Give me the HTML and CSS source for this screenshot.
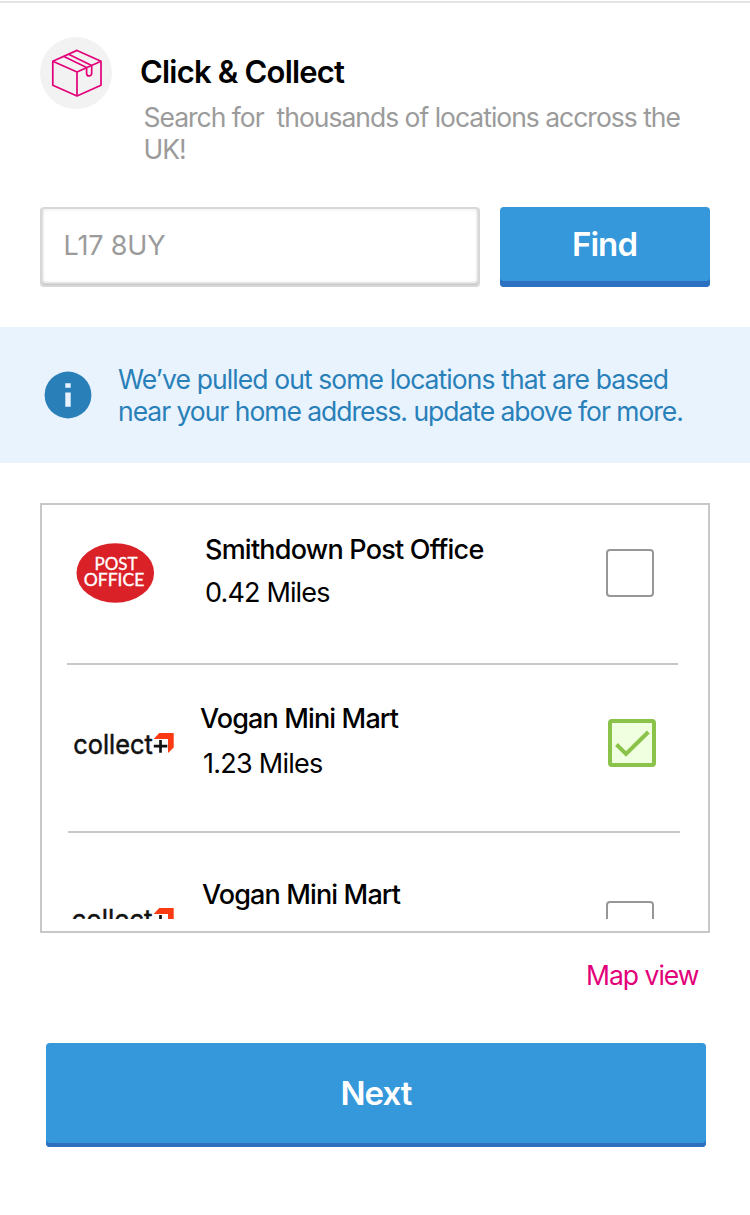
FILE: index.html
```html
<!DOCTYPE html>
<html lang="en">
<head>
<meta charset="utf-8">
<title>Click &amp; Collect</title>
<link rel="stylesheet" href="styles.css">
</head>
<body>
<main class="page">
  <header class="intro">
    <div class="intro-icon">
      <svg width="72" height="72" viewBox="0 0 72 72" fill="none" stroke="#e2007a" stroke-width="1.7" stroke-linejoin="round">
        <path d="M37 13.4 61 24.3V48.2L37 59 12.8 48.2V24.3Z"/>
        <path d="M12.8 24.3 37 35 61 24.3M37 35V59"/>
        <path d="M28.6 17.2 51.7 28.4M24 19.4 46.6 30.5M46.6 30.5V36.2A2.5 2.7 0 0 0 51.7 36.2V28.4"/>
      </svg>
    </div>
    <div class="intro-copy">
      <h1 class="intro-title">Click &amp; Collect</h1>
      <p class="intro-text">Search for&nbsp; thousands of locations accross the<br>UK!</p>
    </div>
  </header>
  <form class="search">
    <div class="field">L17 8UY</div>
    <button class="btn find" type="button">Find</button>
  </form>
  <section class="notice">
    <svg class="notice-icon" width="48" height="48" viewBox="0 0 48 48">
      <circle cx="24" cy="24" r="23.4" fill="#2980b9"/>
      <path d="M21.3 12.2h5.4v4.6h-5.4zM21.3 21.5h5.4v14.3h-5.4z" fill="#e8f3fe"/>
    </svg>
    <p class="notice-text"><span class="line-a">We’ve pulled out some locations that are based</span><br><span class="line-b">near your home address. update above for more.</span></p>
  </section>
  <section class="list">
    <div class="viewport">
      <article class="row first">
        <svg class="post-logo" width="80" height="62" viewBox="0 0 80 62">
          <ellipse cx="40.3" cy="31" rx="38.8" ry="29.8" fill="#da2128"/>
          <g class="post-word">
            <text x="19.5" y="27.5" textLength="43" lengthAdjust="spacingAndGlyphs">POST</text>
            <text x="8.8" y="44" textLength="60.5" lengthAdjust="spacingAndGlyphs">OFFICE</text>
          </g>
        </svg>
        <div class="place"><h2 class="name">Smithdown Post Office</h2><p class="miles">0.42 Miles</p></div>
        <span class="check"></span>
      </article>
      <article class="row second">
        <svg class="collect-logo" width="102" height="24" viewBox="0 0 102 24">
          <path d="M80.7 7 86.2 1H100.7V15.5L95 21V7Z" fill="#f93a13"/>
          <text class="collect-word" x="0.3" y="21.6" textLength="79.5" lengthAdjust="spacingAndGlyphs">collect</text>
          <path d="M80.8 14.2H94.3M87.5 8V20.8" stroke="#111" stroke-width="2.7"/>
        </svg>
        <div class="place"><h2 class="name">Vogan Mini Mart</h2><p class="miles">1.23 Miles</p></div>
        <span class="check checked">
          <svg width="40" height="40" viewBox="0 0 40 40" fill="none" stroke="#8bc34a" stroke-width="4"><path d="M4.5 21.5 14 31 36.3 9"/></svg>
        </span>
      </article>
      <article class="row third">
        <svg class="collect-logo" width="102" height="24" viewBox="0 0 102 24">
          <path d="M80.7 7 86.2 1H100.7V15.5L95 21V7Z" fill="#f93a13"/>
          <text class="collect-word" x="-1.5" y="21.6" textLength="81" lengthAdjust="spacingAndGlyphs">collect</text>
          <path d="M80.8 14.2H94.3M87.5 8V20.8" stroke="#111" stroke-width="2.7"/>
        </svg>
        <div class="place"><h2 class="name">Vogan Mini Mart</h2></div>
        <span class="check"></span>
      </article>
    </div>
  </section>
  <a class="map-link">Map view</a>
  <button class="btn next" type="button">Next</button>
</main>
</body>
</html>
```

FILE: styles.css
```css
* { box-sizing: border-box; }
body { margin: 0; background: #fff; font-family: Inter, "Liberation Sans", sans-serif; font-size: 27px; line-height: 32px; }
h1, h2, p { margin: 0; }
.page { display: flex; flex-direction: column; height: 1214px; overflow: hidden; margin-top: 1px; border-top: 2px solid #e3e4e4; }
.intro { display: flex; gap: 28px; height: 204px; padding: 34px 40px 0; }
.intro-icon { flex: none; width: 72px; height: 72px; border-radius: 50%; background: #f2f2f2; }
.intro-icon svg { display: block; }
.intro-copy { padding-top: 15px; }
.intro-title { font-size: 31px; font-weight: 600; line-height: 40px; letter-spacing: -0.8px; }
.intro-text { margin: 9px 0 0 3.5px; color: #9b9b9b; font-size: 26.5px; letter-spacing: -1.01px; white-space: nowrap; }
.search { display: flex; gap: 20px; padding: 0 40px; }
.field { width: 440px; height: 80px; padding: 21px 21.5px; border: 2px solid #d8d8d8; border-radius: 4px; color: #9b9b9b; letter-spacing: -0.15px; box-shadow: inset 0 -2px 3px rgba(0,0,0,.2), inset 0 0 4px rgba(0,0,0,.1); }
.btn { display: block; padding: 0; border: 0; border-radius: 4px; background: #3498db; color: #fff; font-family: inherit; font-size: 33px; font-weight: 600; line-height: 40px; letter-spacing: -0.9px; text-align: center; }
.find { width: 210px; height: 80px; padding: 0 1px 6px 0; box-shadow: inset 0 -6px #2c70bf; }
.notice { display: flex; gap: 26px; height: 136px; margin-top: 40px; padding: 36px 44px; background: #e8f3fe; color: #2980b9; }
.notice-icon { flex: none; margin-top: 8px; }
.notice-text { font-size: 26.5px; white-space: nowrap; }
.line-a { letter-spacing: -0.91px; }
.line-b { letter-spacing: -1.03px; }
.list { height: 430px; margin: 40px 40px 0; padding-bottom: 12px; border: 2px solid #c8c8c8; }
.viewport { height: 414px; overflow: hidden; }
.row { display: grid; grid-template-columns: 138px 401px 48px; align-items: start; }
.first { height: 160px; margin: 0 30px 0 25px; border-bottom: 2px solid #c8c8c8; }
.second { height: 168px; margin: 0 28px 0 26px; border-bottom: 2px solid #c8c8c8; grid-template-columns: 132px 408px 48px; }
.third { height: 168px; margin: 0 28px 0 26px; grid-template-columns: 134px 404px 48px; }
.post-logo { margin: 37px 0 0 8px; }
.post-word { fill: #fff; stroke: #fff; stroke-width: .35; font-family: Lato, sans-serif; font-size: 17.5px; }
.collect-logo { margin: 67px 0 0 5px; overflow: visible; }
.third .collect-logo { margin-top: 74px; }
.collect-word { fill: #111; stroke: #111; stroke-width: .5; font-family: Inter, sans-serif; font-size: 27.5px; }
.place { white-space: nowrap; }
.first .place { padding-top: 29px; }
.second .place { padding-top: 38px; }
.third .place { padding-top: 46px; }
.name { font-size: 27px; font-weight: 500; letter-spacing: -0.78px; }
.second .name, .third .name { letter-spacing: -0.87px; }
.miles { margin-top: 11px; letter-spacing: -0.85px; }
.second .miles { margin: 13px 0 0 3px; letter-spacing: -0.75px; }
.check { display: block; width: 48px; height: 48px; margin-top: 44px; border: 2px solid #979797; border-radius: 4px; }
.checked { margin-top: 54px; border: 4px solid #8bc34a; background: #f0ffe0; }
.checked svg { display: block; }
.third .check { margin-top: 68px; }
.map-link { align-self: flex-end; margin: 26px 51.5px 0 0; color: #e2007a; font-size: 26.5px; letter-spacing: -1px; }
.next { width: 660px; height: 104px; flex: none; margin: 52px 0 0 46px; padding-bottom: 4px; box-shadow: inset 0 -4px #2c70bf; }
```
